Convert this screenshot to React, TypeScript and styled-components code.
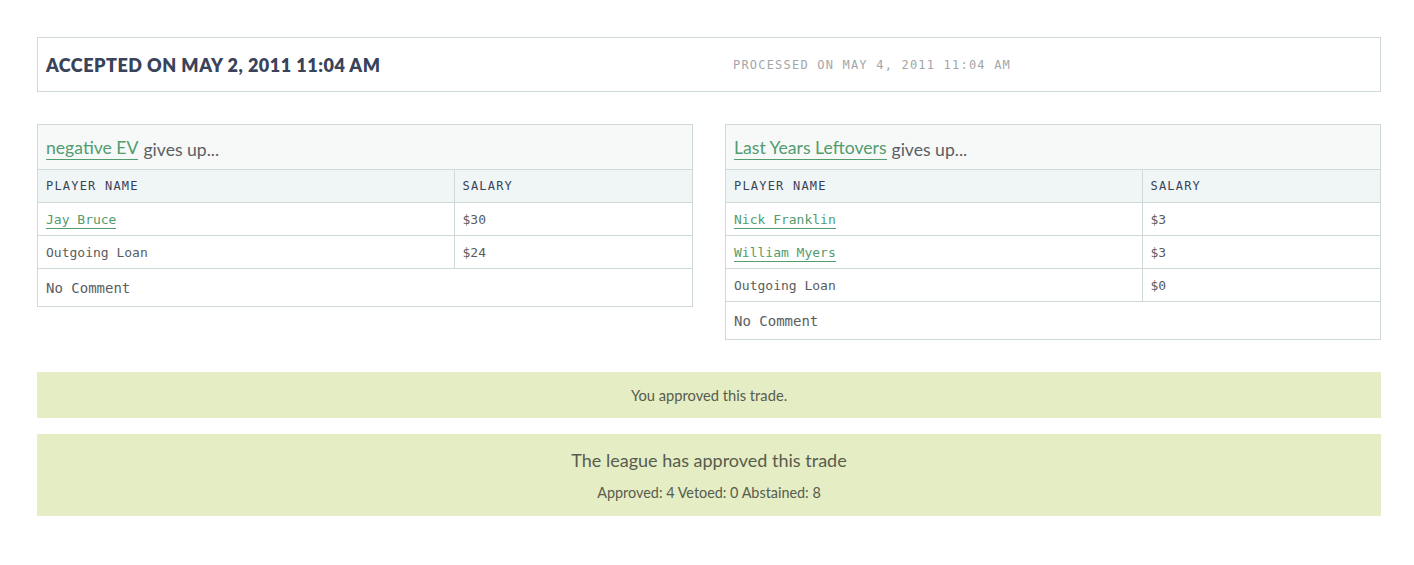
import React from "react";
import styled, { createGlobalStyle } from "styled-components";

const GlobalStyle = createGlobalStyle`
  html, body { margin: 0; padding: 0; background: #ffffff; }
  body { font-family: "Lato", "Open Sans", sans-serif; }
`;

const MONO = `"DejaVu Sans Mono", "Liberation Mono", monospace`;
const SANS = `"Lato", "Open Sans", sans-serif`;
const BORDER = "#cfd9d9";

const Page = styled.div`
  width: 1344px;
  padding: 37px 33px 40px 37px;
  display: flex;
  flex-direction: column;
`;

const Header = styled.div`
  border: 1px solid ${BORDER};
  height: 53px;
  display: grid;
  grid-template-columns: 1fr 1fr;
  column-gap: 32px;
  align-items: center;
`;

const Accepted = styled.h2`
  margin: 0;
  padding-left: 8px;
  font-family: ${SANS};
  font-weight: 800;
  font-size: 18px;
  letter-spacing: 0.5px;
  color: #39435a;
`;

const Processed = styled.div`
  padding-left: 8px;
  font-family: ${MONO};
  font-size: 12px;
  letter-spacing: 1.2px;
  color: #a3a6a8;
`;

const Sides = styled.div`
  margin-top: 32px;
  display: grid;
  grid-template-columns: 1fr 1fr;
  column-gap: 32px;
  align-items: start;
`;

const Side = styled.div`
  border: 1px solid ${BORDER};
`;

const SideTitle = styled.div`
  height: 45px;
  display: flex;
  align-items: center;
  padding: 4px 8px 0;
  box-sizing: border-box;
  background: #f7f9f9;
  font-family: ${SANS};
  font-size: 17.6px;
  color: #5b5f63;
  border-bottom: 1px solid ${BORDER};
`;

const TeamLink = styled.a`
  color: #529c6e;
  text-decoration: none;
  border-bottom: 1px solid #529c6e;
  line-height: 1.15;
  margin-right: 5px;
`;

const Table = styled.table`
  width: 100%;
  border-collapse: collapse;
  table-layout: fixed;
`;

const Th = styled.th<{ $last?: boolean }>`
  height: 32px;
  padding: 0 8px;
  text-align: left;
  font-family: ${MONO};
  font-weight: 400;
  font-size: 12px;
  letter-spacing: 1.2px;
  color: #39435a;
  background: #f0f5f5;
  border-bottom: 1px solid ${BORDER};
  border-right: ${(p) => (p.$last ? "none" : `1px solid ${BORDER}`)};
`;

const Td = styled.td<{ $last?: boolean }>`
  height: 32px;
  padding: 0 8px;
  font-family: ${MONO};
  font-size: 13px;
  color: #5a5d60;
  border-bottom: 1px solid ${BORDER};
  border-right: ${(p) => (p.$last ? "none" : `1px solid ${BORDER}`)};
`;

const PlayerLink = styled.a`
  color: #529c6e;
  text-decoration: none;
  border-bottom: 1px solid #529c6e;
  padding-bottom: 1px;
`;

const Comment = styled.div`
  height: 37px;
  display: flex;
  align-items: center;
  padding: 0 8px;
  font-family: ${MONO};
  font-size: 14px;
  color: #5a5d60;
`;

const Notice = styled.div<{ $tall?: boolean }>`
  background: #e5edc4;
  display: flex;
  flex-direction: column;
  align-items: center;
  justify-content: center;
  font-family: ${SANS};
  color: #585c4e;
  height: ${(p) => (p.$tall ? "82px" : "46px")};
  margin-top: ${(p) => (p.$tall ? "16px" : "32px")};
`;

const NoticeSmall = styled.div<{ $size?: number }>`
  font-size: ${(p) => p.$size ?? 14.7}px;
`;

const NoticeBig = styled.div`
  font-size: 18px;
  margin-bottom: 13px;
`;

type Row = { name: string; salary: string; link?: boolean };

const sides: { team: string; rows: Row[] }[] = [
  {
    team: "negative EV",
    rows: [
      { name: "Jay Bruce", salary: "$30", link: true },
      { name: "Outgoing Loan", salary: "$24" },
    ],
  },
  {
    team: "Last Years Leftovers",
    rows: [
      { name: "Nick Franklin", salary: "$3", link: true },
      { name: "William Myers", salary: "$3", link: true },
      { name: "Outgoing Loan", salary: "$0" },
    ],
  },
];

export default function App() {
  return (
    <>
      <GlobalStyle />
      <Page>
        <Header>
          <Accepted>ACCEPTED ON MAY 2, 2011 11:04 AM</Accepted>
          <Processed>PROCESSED ON MAY 4, 2011 11:04 AM</Processed>
        </Header>
        <Sides>
          {sides.map((s) => (
            <Side key={s.team}>
              <SideTitle>
                <TeamLink href="#">{s.team}</TeamLink>gives up...
              </SideTitle>
              <Table>
                <colgroup>
                  <col style={{ width: "416px" }} />
                  <col />
                </colgroup>
                <thead>
                  <tr>
                    <Th>PLAYER NAME</Th>
                    <Th $last>SALARY</Th>
                  </tr>
                </thead>
                <tbody>
                  {s.rows.map((r) => (
                    <tr key={r.name}>
                      <Td>{r.link ? <PlayerLink href="#">{r.name}</PlayerLink> : r.name}</Td>
                      <Td $last>{r.salary}</Td>
                    </tr>
                  ))}
                </tbody>
              </Table>
              <Comment>No Comment</Comment>
            </Side>
          ))}
        </Sides>
        <Notice>
          <NoticeSmall>You approved this trade.</NoticeSmall>
        </Notice>
        <Notice $tall>
          <NoticeBig>The league has approved this trade</NoticeBig>
          <NoticeSmall $size={14.4}>Approved: 4 Vetoed: 0 Abstained: 8</NoticeSmall>
        </Notice>
      </Page>
    </>
  );
}
